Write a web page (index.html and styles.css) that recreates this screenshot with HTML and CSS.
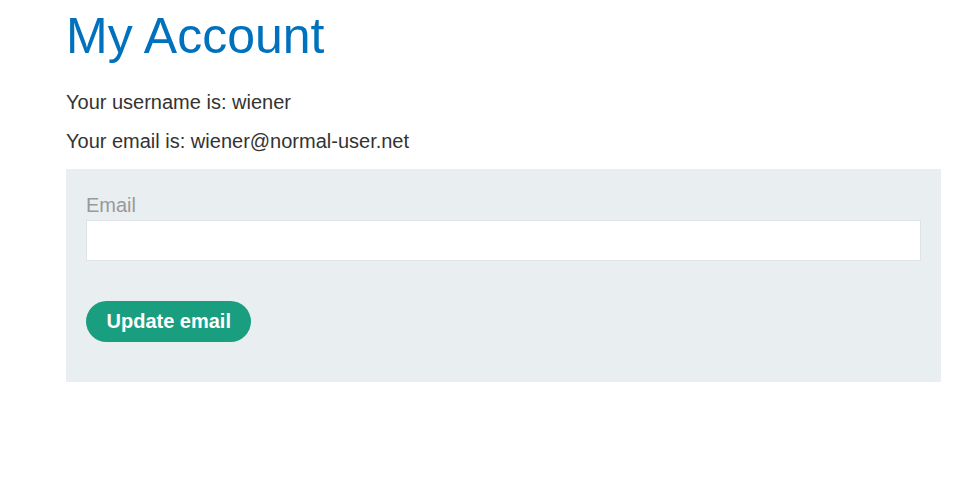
FILE: index.html
```html
<!DOCTYPE html>
<html>
<head>
<meta charset="utf-8">
<link rel="stylesheet" href="styles.css">
</head>
<body>
<div class="container">
  <h1 class="title">My Account</h1>
  <p class="info">Your username is: wiener</p>
  <p class="info">Your email is: wiener@normal-user.net</p>
  <form class="panel">
    <label class="label" for="email">Email</label>
    <input class="field" id="email" type="email">
    <button class="btn" type="button">Update email</button>
  </form>
</div>
</body>
</html>
```
FILE: styles.css
```css
html, body {
  margin: 0;
  padding: 0;
  background: #fff;
}
body {
  font-family: "Liberation Sans", Arial, sans-serif;
  color: #333332;
}
.container {
  padding: 0 12px 0 66px;
}
.title {
  margin: 0 0 27px;
  padding-top: 8px;
  font-size: 50px;
  line-height: 56px;
  font-weight: normal;
  color: #0071bc;
}
.info {
  margin: 16px 0 0;
  font-size: 20px;
  line-height: 23px;
}
.panel {
  margin-top: 16px;
  background: #e9eef1;
  padding: 23px 20px 40px;
  display: flex;
  flex-direction: column;
  align-items: flex-start;
}
.label {
  color: #999;
  font-size: 20px;
  line-height: 26px;
  margin-bottom: 2px;
}
.field {
  box-sizing: border-box;
  width: 100%;
  height: 41px;
  border: 1px solid #dfe3e5;
  background: #fff;
  margin: 0 0 40px;
}
.btn {
  height: 41px;
  padding: 0 20.5px;
  border: none;
  border-radius: 21px;
  background: #199e80;
  color: #fff;
  font-family: "Liberation Sans", Arial, sans-serif;
  font-weight: bold;
  font-size: 20px;
}
```
